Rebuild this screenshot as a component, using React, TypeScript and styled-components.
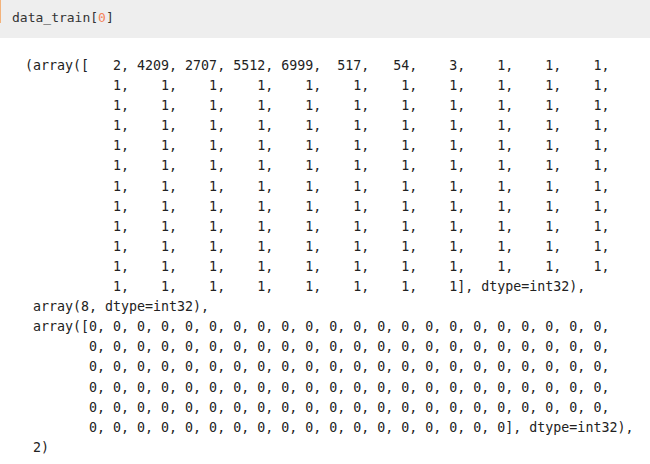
import React from "react";
import styled, { createGlobalStyle } from "styled-components";

const Global = createGlobalStyle`
  html, body { margin: 0; padding: 0; background: #ffffff; }
  body { width: 650px; height: 464px; overflow: hidden; }
`;

const Page = styled.div`
  display: flex;
  flex-direction: column;
  width: 650px;
`;

const InputCell = styled.div`
  display: flex;
  align-items: flex-start;
  height: 38px;
  background: #eeeeee;
`;

const SelectBar = styled.div`
  width: 1px;
  height: 23px;
  background: #f3b27a;
  flex: none;
`;

const Code = styled.pre`
  margin: 0;
  padding: 8px 0 0 11px;
  font-family: "DejaVu Sans Mono", "Liberation Mono", monospace;
  font-size: 13px;
  line-height: 19px;
  color: #333333;
`;

const Num = styled.span`
  color: #f4825a;
`;

const Output = styled.pre`
  margin: 0;
  padding: 18px 0 0 25px;
  font-family: "DejaVu Sans Mono", "Liberation Mono", monospace;
  font-size: 13.3px;
  letter-spacing: 0;
  line-height: 20.1px;
  color: #222222;
`;

const fmt = (n: number) => String(n).padStart(4, " ");

function buildText(): string {
  const first = [2, 4209, 2707, 5512, 6999, 517, 54, 3, 1, 1, 1];
  const lines: string[] = [];
  lines.push("(array([" + first.map(fmt).join(", ") + ",");
  const ones11 = Array(11).fill(1).map(fmt).join(", ") + ",";
  for (let i = 0; i < 10; i++) lines.push("        " + ones11);
  lines.push("        " + Array(8).fill(1).map(fmt).join(", ") + "], dtype=int32),");
  lines.push(" array(8, dtype=int32),");
  const zeros22 = Array(22).fill("0").join(", ") + ",";
  lines.push(" array([" + zeros22);
  for (let i = 0; i < 4; i++) lines.push("        " + zeros22);
  lines.push("        " + Array(18).fill("0").join(", ") + "], dtype=int32),");
  lines.push(" 2)");
  return lines.join("\n");
}

export default function App() {
  return (
    <Page>
      <Global />
      <InputCell>
        <SelectBar />
        <Code>
          data_train[<Num>0</Num>]
        </Code>
      </InputCell>
      <Output>{buildText()}</Output>
    </Page>
  );
}
